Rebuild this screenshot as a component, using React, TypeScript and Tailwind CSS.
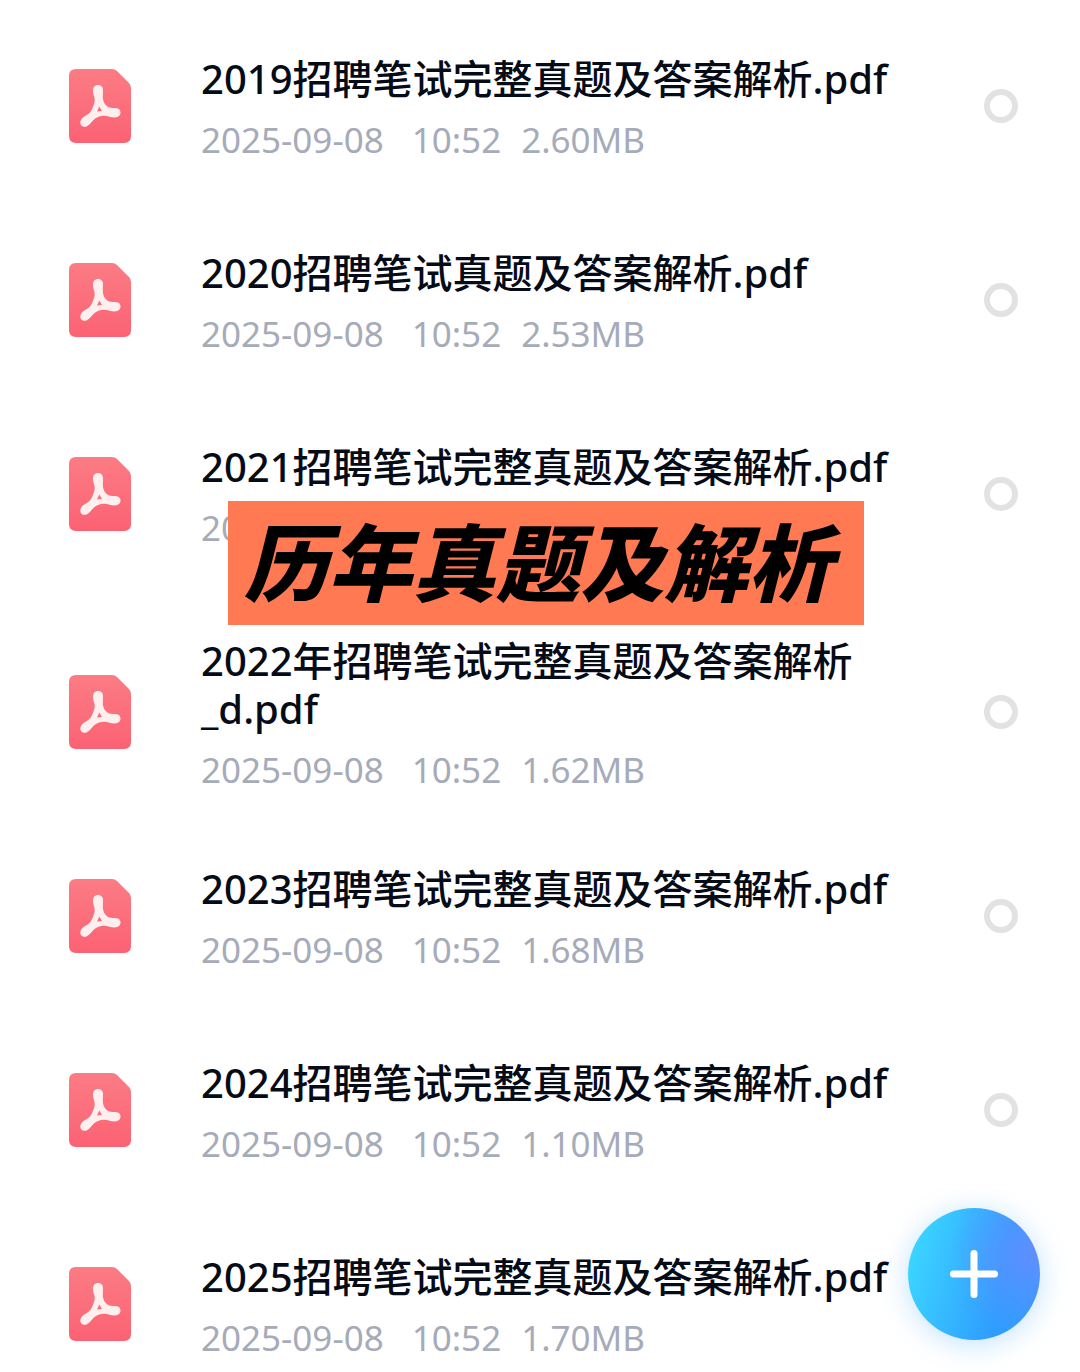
const files = [
  { name: "2019招聘笔试完整真题及答案解析.pdf", date: "2025-09-08", time: "10:52", size: "2.60MB" },
  { name: "2020招聘笔试真题及答案解析.pdf", date: "2025-09-08", time: "10:52", size: "2.53MB" },
  { name: "2021招聘笔试完整真题及答案解析.pdf", date: "2025-09-08", time: "10:52", size: "1.65MB" },
  { name: "2022年招聘笔试完整真题及答案解析_d.pdf", date: "2025-09-08", time: "10:52", size: "1.62MB" },
  { name: "2023招聘笔试完整真题及答案解析.pdf", date: "2025-09-08", time: "10:52", size: "1.68MB" },
  { name: "2024招聘笔试完整真题及答案解析.pdf", date: "2025-09-08", time: "10:52", size: "1.10MB" },
  { name: "2025招聘笔试完整真题及答案解析.pdf", date: "2025-09-08", time: "10:52", size: "1.70MB" },
];

function PdfIcon() {
  return (
    <svg width="62" height="74" viewBox="0 0 62 74" className="shrink-0" aria-hidden="true">
      <defs>
        <linearGradient id="sheet" x1="0" y1="0" x2="0" y2="1">
          <stop offset="0" stopColor="#fb7c84" />
          <stop offset="1" stopColor="#fb6274" />
        </linearGradient>
      </defs>
      <path
        d="M7 0H43Q46 0 48 2L60 14Q62 16 62 19V67Q62 74 55 74H7Q0 74 0 67V7Q0 0 7 0Z"
        fill="url(#sheet)"
      />
      <path
        d="M29 16C32.500 16 34.300 18.500 34 22C33.900 26 33.500 29 34.300 31.500C35.200 34.500 37 37 39.500 38.300C42 39.300 44 38.800 46.500 39C50 39.200 51.800 41.400 51.500 44C51.200 47 48.500 48.400 45.500 48.400C42 48.400 39 47 35.500 46.800C31 46.700 28 48 25.500 50C22.500 52.500 21 55.500 18 57.300C14.500 58.900 11.200 57 11.300 53.500C11.500 50 14 48 17 46.500C20.500 44.800 22 42.500 23.500 39C25 35.500 26.200 32.500 25.600 29.500C25 26.500 24 25 24 21.500C24 18.300 25.800 16 29 16ZM30.300 37.500L28 42.500L33 42Z"
        fill="#fff0ef"
        fillRule="evenodd"
      />
    </svg>
  );
}

function FileRow({ file }: { file: (typeof files)[number] }) {
  return (
    <li className="min-h-[194px] pt-[46px] pb-8">
      <label className="flex items-center pl-[69px] pr-[62px]">
        <PdfIcon />
        <div className="ml-[70px] mr-8 flex-1">
          <p className="text-[40px] leading-[48px] font-medium text-[#060b18]">{file.name}</p>
          <p className="mt-5 flex text-[35px] leading-[34px] text-[#a6abb9]">
            <span>{file.date}</span>
            <span className="ml-7">{file.time}</span>
            <span className="ml-5">{file.size}</span>
          </p>
        </div>
        <input
          type="checkbox"
          className="size-[34px] shrink-0 appearance-none rounded-full border-[6px] border-[#e2e2e2] checked:border-[#2f9bff]"
        />
      </label>
    </li>
  );
}

export default function App() {
  return (
    <main className="relative h-screen overflow-hidden bg-white font-['Noto_Sans','Noto_Sans_CJK_SC',sans-serif]">
      <ul className="pt-[9px]">
        {files.map((file) => (
          <FileRow key={file.name} file={file} />
        ))}
      </ul>

      <h1 className="absolute top-[501px] left-[228px] bg-[#ff7a53] pr-8 pl-4 text-[84px] leading-[124px] font-black text-black italic">
        历年真题及解析
      </h1>

      <button
        type="button"
        aria-label="添加"
        className="fixed right-10 bottom-8 flex size-[132px] items-center justify-center rounded-full bg-[radial-gradient(circle_at_95%_35%,#5f8fff_0%,#5f8fff00_55%),linear-gradient(105deg,#3dd8ff_5%,#2f9dff_70%)] shadow-[0_4px_28px_rgba(50,160,255,0.3)]"
      >
        <svg width="48" height="48" viewBox="0 0 48 48" stroke="#fff" strokeWidth="7" strokeLinecap="round">
          <path d="M24 3.500V44.500M3.500 24H44.500" />
        </svg>
      </button>
    </main>
  );
}
